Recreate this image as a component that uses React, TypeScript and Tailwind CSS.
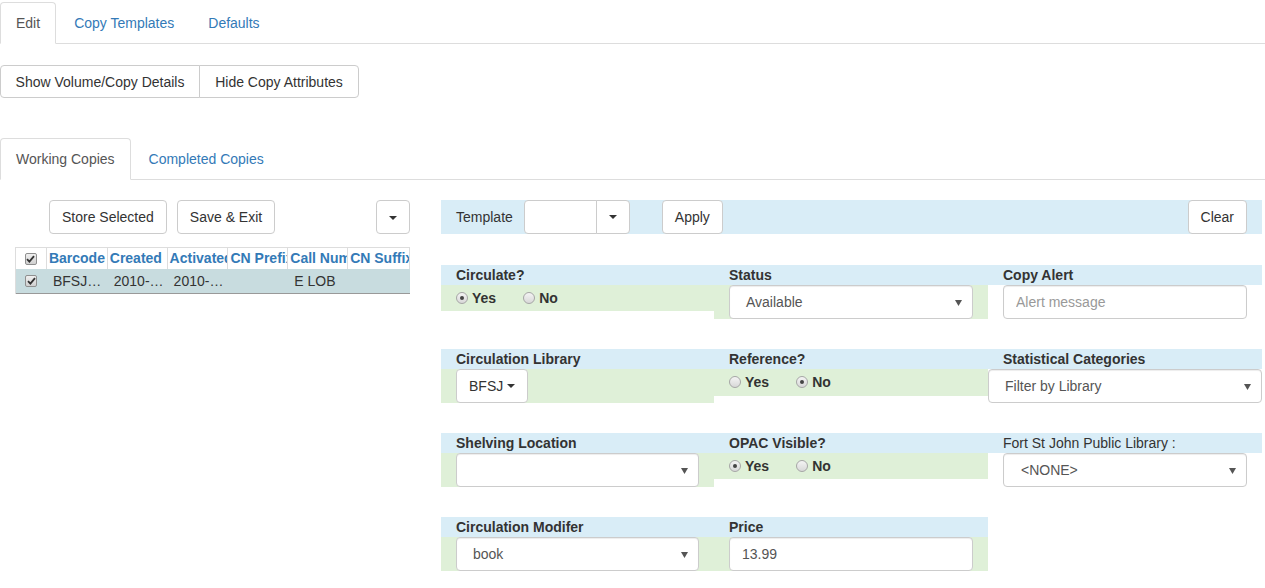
import React from 'react';

const blue = 'bg-[#d9edf7]';
const green = 'bg-[#dff0d8]';

function Caret() {
  return <span className="inline-block w-0 h-0 border-t-[4px] border-t-[#333] border-x-[4px] border-x-transparent align-middle" />;
}

function SelectArrow() {
  return (
    <svg width="7" height="6" viewBox="0 0 7 6" className="absolute right-[10px] top-[14px]">
      <path d="M0 0 L7 0 L3.5 6 Z" fill="#555" />
    </svg>
  );
}

function Select({ value, className = '' }: { value: string; className?: string }) {
  return (
    <div className={`relative h-[34px] bg-white border border-[#ccc] rounded-[4px] shadow-[inset_0_1px_1px_rgba(0,0,0,0.075)] pl-[16px] leading-[32px] text-[#555] ${className}`}>
      {value}
      <SelectArrow />
    </div>
  );
}

function Radio({ checked, label, first }: { checked: boolean; label: string; first?: boolean }) {
  return (
    <label className={`flex items-center ${first ? '' : 'ml-[27px]'}`}>
      <span className="w-[12px] h-[12px] rounded-full border border-[#a6a6a6] bg-gradient-to-b from-[#f4f4f4] to-[#d8d8d8] flex items-center justify-center">
        {checked && <span className="w-[4px] h-[4px] rounded-full bg-[#444]" />}
      </span>
      <span className="ml-[4px] font-bold text-[#333]">{label}</span>
    </label>
  );
}

function Check() {
  return (
    <span className="w-[12px] h-[12px] border border-[#8f8f8f] rounded-[2px] bg-gradient-to-b from-[#f0f0f0] to-[#d0d0d0] flex items-center justify-center">
      <svg width="9" height="8" viewBox="0 0 9 8">
        <path d="M1 4.2 L3.4 6.6 L8 1.2" stroke="#333" strokeWidth="1.8" fill="none" />
      </svg>
    </span>
  );
}

function Btn({ children, className = '' }: { children: React.ReactNode; className?: string }) {
  return (
    <button className={`h-[34px] px-[12px] bg-white border border-[#ccc] rounded-[4px] text-[#333] leading-5 ${className}`}>
      {children}
    </button>
  );
}

function Field({ label, bold = true, bodyGreen = true, pad = true, children }: {
  label: string; bold?: boolean; bodyGreen?: boolean; pad?: boolean; children: React.ReactNode;
}) {
  return (
    <div>
      <div className={`${blue} h-[20px] px-[15px] leading-5 text-[#333] ${bold ? 'font-bold' : ''}`}>{label}</div>
      <div className={`${bodyGreen ? green : ''} ${pad ? 'px-[15px]' : ''}`}>{children}</div>
    </div>
  );
}

const cols = [
  { name: 'Barcode', w: 'w-[61px]', v: 'BFSJ…' },
  { name: 'Created', w: 'w-[60px]', v: '2010-…' },
  { name: 'Activated', w: 'w-[61px]', v: '2010-…' },
  { name: 'CN Prefix', w: 'w-[60px]', v: '' },
  { name: 'Call Num', w: 'w-[60px]', v: 'E LOB' },
  { name: 'CN Suffix', w: 'w-[62px]', v: '' },
];

const tabOn = 'px-[15px] pt-[10px] pb-[9px] border border-[#ddd] border-b-white rounded-t-[4px] -mb-px mr-[2px] bg-white text-[#555]';
const tabOff = 'px-[15px] pt-[10px] pb-[9px] border border-transparent mr-[2px] text-[#337ab7]';

export default function App() {
  return (
    <div className="w-[1265px] min-h-[588px] bg-white text-[14px] leading-5 text-[#333] font-['Liberation_Sans',Arial,sans-serif]">
      {/* top tabs */}
      <div className="flex border-b border-[#ddd] pt-[2px]">
        <div className={tabOn}>Edit</div>
        <div className={tabOff}>Copy Templates</div>
        <div className={tabOff}>Defaults</div>
      </div>

      <div className="flex mt-[21px]">
        <button className="w-[200px] h-[33px] bg-white border border-[#ccc] rounded-l-[4px] text-[#333]">Show Volume/Copy Details</button>
        <button className="w-[160px] h-[33px] bg-white border border-[#ccc] -ml-px rounded-r-[4px] text-[#333]">Hide Copy Attributes</button>
      </div>

      {/* second tabs */}
      <div className="flex border-b border-[#ddd] mt-[40px]">
        <div className={tabOn}>Working Copies</div>
        <div className={tabOff}>Completed Copies</div>
      </div>

      <div className="flex pt-[20px]">
        {/* left */}
        <div className="w-[426px] px-[15px]">
          <div className="flex">
            <Btn className="ml-[34px]">Store Selected</Btn>
            <Btn className="ml-[10px]">Save &amp; Exit</Btn>
            <Btn className="ml-auto mr-px"><Caret /></Btn>
          </div>
          <div className="mt-[13px] w-[395px] border-t border-l border-[#ddd]">
            <div className="flex h-[21px] bg-white">
              <div className="w-[31px] border-r border-[#ddd] flex items-center justify-center"><Check /></div>
              {cols.map(c => (
                <div key={c.name} className={`${c.w} border-r border-[#ddd] pl-[2px] overflow-hidden whitespace-nowrap font-bold text-[#337ab7] leading-[21px]`}>{c.name}</div>
              ))}
            </div>
            <div className="flex h-[25px] bg-[#c8dcdf] border-b border-[#999]">
              <div className="w-[31px] flex items-center justify-center"><Check /></div>
              {cols.map(c => (
                <div key={c.name} className={`${c.w} pl-[6px] overflow-hidden whitespace-nowrap leading-[24px] text-[#333]`}>{c.v}</div>
              ))}
            </div>
          </div>
        </div>

        {/* right */}
        <div className="w-[836px] pl-[15px]">
          <div className={`${blue} h-[34px] flex items-start px-[15px]`}>
            <span className="leading-[34px] text-[#333]">Template</span>
            <div className="flex ml-[11px]">
              <div className="w-[73px] h-[34px] bg-white border border-[#ccc] rounded-l-[4px]" />
              <button className="w-[34px] h-[34px] -ml-px bg-white border border-[#ccc] rounded-r-[4px] flex items-center justify-center"><Caret /></button>
            </div>
            <Btn className="ml-[32px]">Apply</Btn>
            <Btn className="ml-auto">Clear</Btn>
          </div>

          <div className="mt-[31px] flex flex-col gap-[30px]">
            <div className="grid grid-cols-[273px_274px_274px] items-start">
              <Field label="Circulate?">
                <div className="flex py-[3px]"><Radio first checked label="Yes" /><Radio checked={false} label="No" /></div>
              </Field>
              <Field label="Status">
                <Select value="Available" />
              </Field>
              <Field label="Copy Alert" bodyGreen={false}>
                <input readOnly placeholder="Alert message" className="w-full h-[34px] border border-[#ccc] rounded-[4px] px-[12px] text-[#555] placeholder:text-[#999] shadow-[inset_0_1px_1px_rgba(0,0,0,0.075)] outline-none" />
              </Field>
            </div>

            <div className="grid grid-cols-[273px_274px_274px] items-start">
              <Field label="Circulation Library">
                <Btn className="flex items-center gap-[4px] h-[33px]">BFSJ <Caret /></Btn>
              </Field>
              <Field label="Reference?">
                <div className="flex py-[3px] pb-[4px]"><Radio first checked={false} label="Yes" /><Radio checked label="No" /></div>
              </Field>
              <Field label="Statistical Categories" bodyGreen={false} pad={false}>
                <Select value="Filter by Library" />
              </Field>
            </div>

            <div className="grid grid-cols-[273px_274px_274px] items-start">
              <Field label="Shelving Location">
                <Select value="" />
              </Field>
              <Field label="OPAC Visible?">
                <div className="flex py-[3px]"><Radio first checked label="Yes" /><Radio checked={false} label="No" /></div>
              </Field>
              <Field label="Fort St John Public Library :" bold={false} bodyGreen={false}>
                <Select value="<NONE>" className="pl-[17px]" />
              </Field>
            </div>

            <div className="grid grid-cols-[273px_274px] items-start">
              <Field label="Circulation Modifer">
                <Select value="book" />
              </Field>
              <Field label="Price">
                <input readOnly value="13.99" className="w-full h-[34px] bg-white border border-[#ccc] rounded-[4px] px-[12px] text-[#555] shadow-[inset_0_1px_1px_rgba(0,0,0,0.075)] outline-none" />
              </Field>
            </div>
          </div>
        </div>
      </div>
    </div>
  );
}
